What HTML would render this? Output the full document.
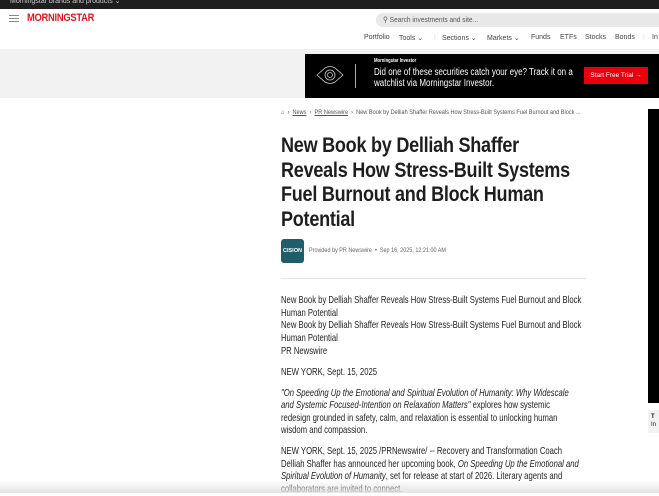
<!DOCTYPE html>
<html><head><meta charset="utf-8"><style>
*{margin:0;padding:0;box-sizing:border-box}
body{width:659px;height:493px;overflow:hidden;background:#fff;font-family:"Liberation Sans",sans-serif;color:#1e1e1e;position:relative}
.a{position:absolute;white-space:nowrap}
.s{transform-origin:left top}
.top{left:0;top:0;width:659px;height:9px;background:#1e1e1e}
.nav span{position:absolute;top:34px;font-size:7px;color:#444}
.body p{font-size:10.4px;line-height:12.6px;color:#222}
</style></head><body>
<div class="a top"></div>
<div class="a" style="left:10px;top:-3px;font-size:7px;color:#ccc">Morningstar brands and products ⌄</div>
<div class="a" style="left:9px;top:15px;width:10px;height:1px;background:#888;box-shadow:0 3px 0 #888,0 6px 0 #888"></div>
<div class="a s" style="left:27px;top:12px;font-size:11px;font-weight:bold;color:#e4171c;letter-spacing:-0.3px;transform:scaleX(0.85)">MORNINGSTAR</div>
<div class="a" style="left:376px;top:13px;width:290px;height:14px;border-radius:7px;background:#e8e8e8"></div>
<div class="a s" style="left:383px;top:15px;font-size:7.5px;color:#555;transform:scaleX(0.88)">⚲ Search investments and site...</div>
<div class="nav">
<span style="left:364px">Portfolio</span><span style="left:399px">Tools ⌄</span><span style="left:434px;color:#ddd">|</span><span style="left:442px">Sections ⌄</span><span style="left:487px">Markets ⌄</span><span style="left:531px">Funds</span><span style="left:560px">ETFs</span><span style="left:585px">Stocks</span><span style="left:615px">Bonds</span><span style="left:643px;color:#ddd">|</span><span style="left:652px">In</span>
</div>
<div class="a" style="left:0;top:49px;width:659px;height:49px;background:#f2f2f2"></div>
<div class="a" style="left:305px;top:54px;width:354px;height:44px;background:#000"></div>
<svg class="a" style="left:315px;top:63px" width="30" height="24" viewBox="0 0 30 24"><path d="M2 12 L10 5 Q15 2 20 5 L28 12 L20 19 Q15 22 10 19 Z" fill="none" stroke="#ccc" stroke-width="0.8"/><circle cx="15" cy="12" r="5" fill="none" stroke="#ccc" stroke-width="0.8"/><circle cx="15" cy="12" r="2.5" fill="none" stroke="#ccc" stroke-width="0.8"/></svg>
<div class="a" style="left:355px;top:64px;width:1px;height:24px;background:#aaa"></div>
<div class="a s" style="left:374px;top:58px;font-size:5px;font-weight:bold;color:#fff;transform:scaleX(0.85)">Morningstar Investor</div>
<div class="a s" style="left:374px;top:67px;font-size:10px;line-height:11px;color:#fff;transform:scaleX(0.8)">Did one of these securities catch your eye? Track it on a<br>watchlist via Morningstar Investor.</div>
<div class="a" style="left:584px;top:67px;width:64px;height:17px;background:#e8000d;color:#fff;font-size:6.5px;text-align:center;line-height:17px">Start Free Trial →</div>
<div class="a s" style="left:281px;top:109px;font-size:6.5px;color:#555;transform:scaleX(0.86)">⌂ &nbsp;› &nbsp;<u>News</u> &nbsp;› &nbsp;<u>PR Newswire</u> &nbsp;› &nbsp;New Book by Delliah Shaffer Reveals How Stress-Built Systems Fuel Burnout and Block ...</div>
<div class="a s" style="left:281px;top:134px;font-size:21px;line-height:24.5px;font-weight:bold;color:#1e1e1e;letter-spacing:-0.3px;transform:scaleX(0.86)">New Book by Delliah Shaffer<br>Reveals How Stress-Built Systems<br>Fuel Burnout and Block Human<br>Potential</div>
<div class="a" style="left:281px;top:239px;width:23px;height:24px;border-radius:3px;background:#1f5d6b;color:#fff;font-size:5.5px;font-weight:bold;line-height:24px;text-align:center">CISION</div>
<div class="a s" style="left:309px;top:247px;font-size:6.2px;color:#666;transform:scaleX(0.88)">Provided by PR Newswire &nbsp;• &nbsp;Sep 16, 2025, 12:21:00 AM</div>
<div class="a" style="left:281px;top:278px;width:305px;height:1px;background:#e5e5e5"></div>
<div class="a body s" style="left:281px;top:295px;width:414px;white-space:normal;transform:scaleX(0.74)">
<p>New Book by Delliah Shaffer Reveals How Stress-Built Systems Fuel Burnout and Block Human Potential</p>
<p>New Book by Delliah Shaffer Reveals How Stress-Built Systems Fuel Burnout and Block Human Potential</p>
<p style="margin-top:1px">PR Newswire</p>
<p style="margin-top:8px">NEW YORK, Sept. 15, 2025</p>
<p style="margin-top:8px"><i>"On Speeding Up the Emotional and Spiritual Evolution of Humanity: Why Widescale<br>and Systemic Focused-Intention on Relaxation Matters"</i> explores how systemic<br>redesign grounded in safety, calm, and relaxation is essential to unlocking human<br>wisdom and compassion.</p>
<p style="margin-top:8px">NEW YORK, Sept. 15, 2025 /PRNewswire/ -- Recovery and Transformation Coach Delliah Shaffer has announced her upcoming book, <i>On Speeding Up the Emotional and Spiritual Evolution of Humanity</i>, set for release at start of 2026. Literary agents and collaborators are invited to connect.</p>
</div>
<div class="a" style="left:648px;top:109px;width:11px;height:294px;background:#000"></div>
<div class="a" style="left:648px;top:410px;width:11px;height:23px;background:#f2f2f2;font-size:6px;padding:3px 0 0 3px;line-height:8px"><b>T</b><br>In</div>
<div class="a" style="left:0;top:480px;width:659px;height:13px;background:linear-gradient(rgba(240,240,240,0),rgba(225,225,225,0.9))"></div>
</body></html>
